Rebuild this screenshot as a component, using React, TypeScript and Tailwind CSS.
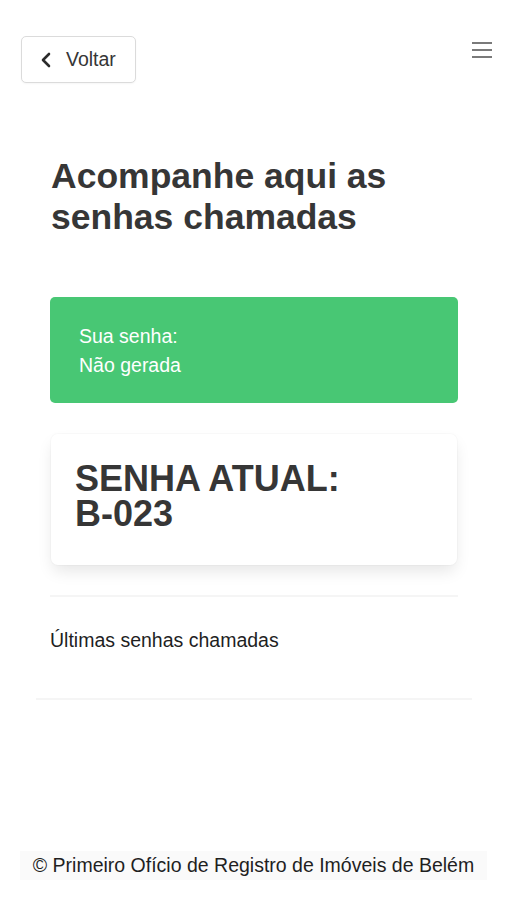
import React from "react";

const Menu = () => (
  <div className="mt-[6px] flex w-[20px] flex-col gap-[5.5px]">
    <span className="block h-[1.5px] w-full bg-[#7a7a7a]" />
    <span className="block h-[1.5px] w-full bg-[#7a7a7a]" />
    <span className="block h-[1.5px] w-full bg-[#7a7a7a]" />
  </div>
);

const App = () => {
  return (
    <main
      className="flex min-h-[900px] w-full flex-col bg-white text-[#363636]"
      style={{ fontFamily: '"Liberation Sans", Arial, sans-serif' }}
    >
      {/* Top bar */}
      <div className="flex items-start justify-between pl-[21px] pr-[15px] pt-[36px]">
        <button className="flex h-[47px] w-[115px] items-center gap-[14px] rounded-[5px] border border-[#dbdbdb] bg-white pl-[18px] text-[19.5px] text-[#363636] shadow-[0_1px_2px_rgba(10,10,10,0.04)]">
          <svg width="12" height="16" viewBox="0 0 12 16" fill="none">
            <path d="M9 2 L3 8 L9 14" stroke="#2b2b2b" strokeWidth="2.6" strokeLinecap="round" strokeLinejoin="round" />
          </svg>
          <span className="leading-[29px]">Voltar</span>
        </button>
        <Menu />
      </div>

      <section className="flex flex-col pl-[50px] pr-[49px]">
        <h1 className="mt-[73px] pl-[1px] text-[35.5px] font-bold leading-[41px] text-[#363636]">
          Acompanhe aqui as
          <br />
          senhas chamadas
        </h1>

        <div className="mt-[59px] rounded-[5px] bg-[#48c774] pb-[23px] pl-[29px] pt-[25px] text-[19.5px] leading-[29px] text-white">
          <p>Sua senha:</p>
          <p>Não gerada</p>
        </div>

        <div className="mx-[1px] mt-[31px] rounded-[7px] bg-white pb-[34px] pl-[24px] pt-[27px] shadow-[0_8px_16px_-2px_rgba(10,10,10,0.1),0_0_0_1px_rgba(10,10,10,0.02)]">
          <p className="text-[36px] font-bold leading-[35px] text-[#363636]">
            SENHA ATUAL:
            <br />
            B-023
          </p>
        </div>

        <div className="mt-[30px] h-[2px] w-full bg-[#f5f5f5]" />

        <p className="mt-[29px] text-[19.5px] leading-[29px] text-[#1f1f1f]">Últimas senhas chamadas</p>

        <div className="-mx-[14px] mt-[43px] h-[2px] bg-[#f5f5f5]" />
      </section>

      <footer className="mx-[20px] mb-[20px] mt-auto bg-[#fafafa] text-center text-[19.5px] leading-[29px] text-[#1f1f1f]">
        © Primeiro Ofício de Registro de Imóveis de Belém
      </footer>
    </main>
  );
};

export default App;
